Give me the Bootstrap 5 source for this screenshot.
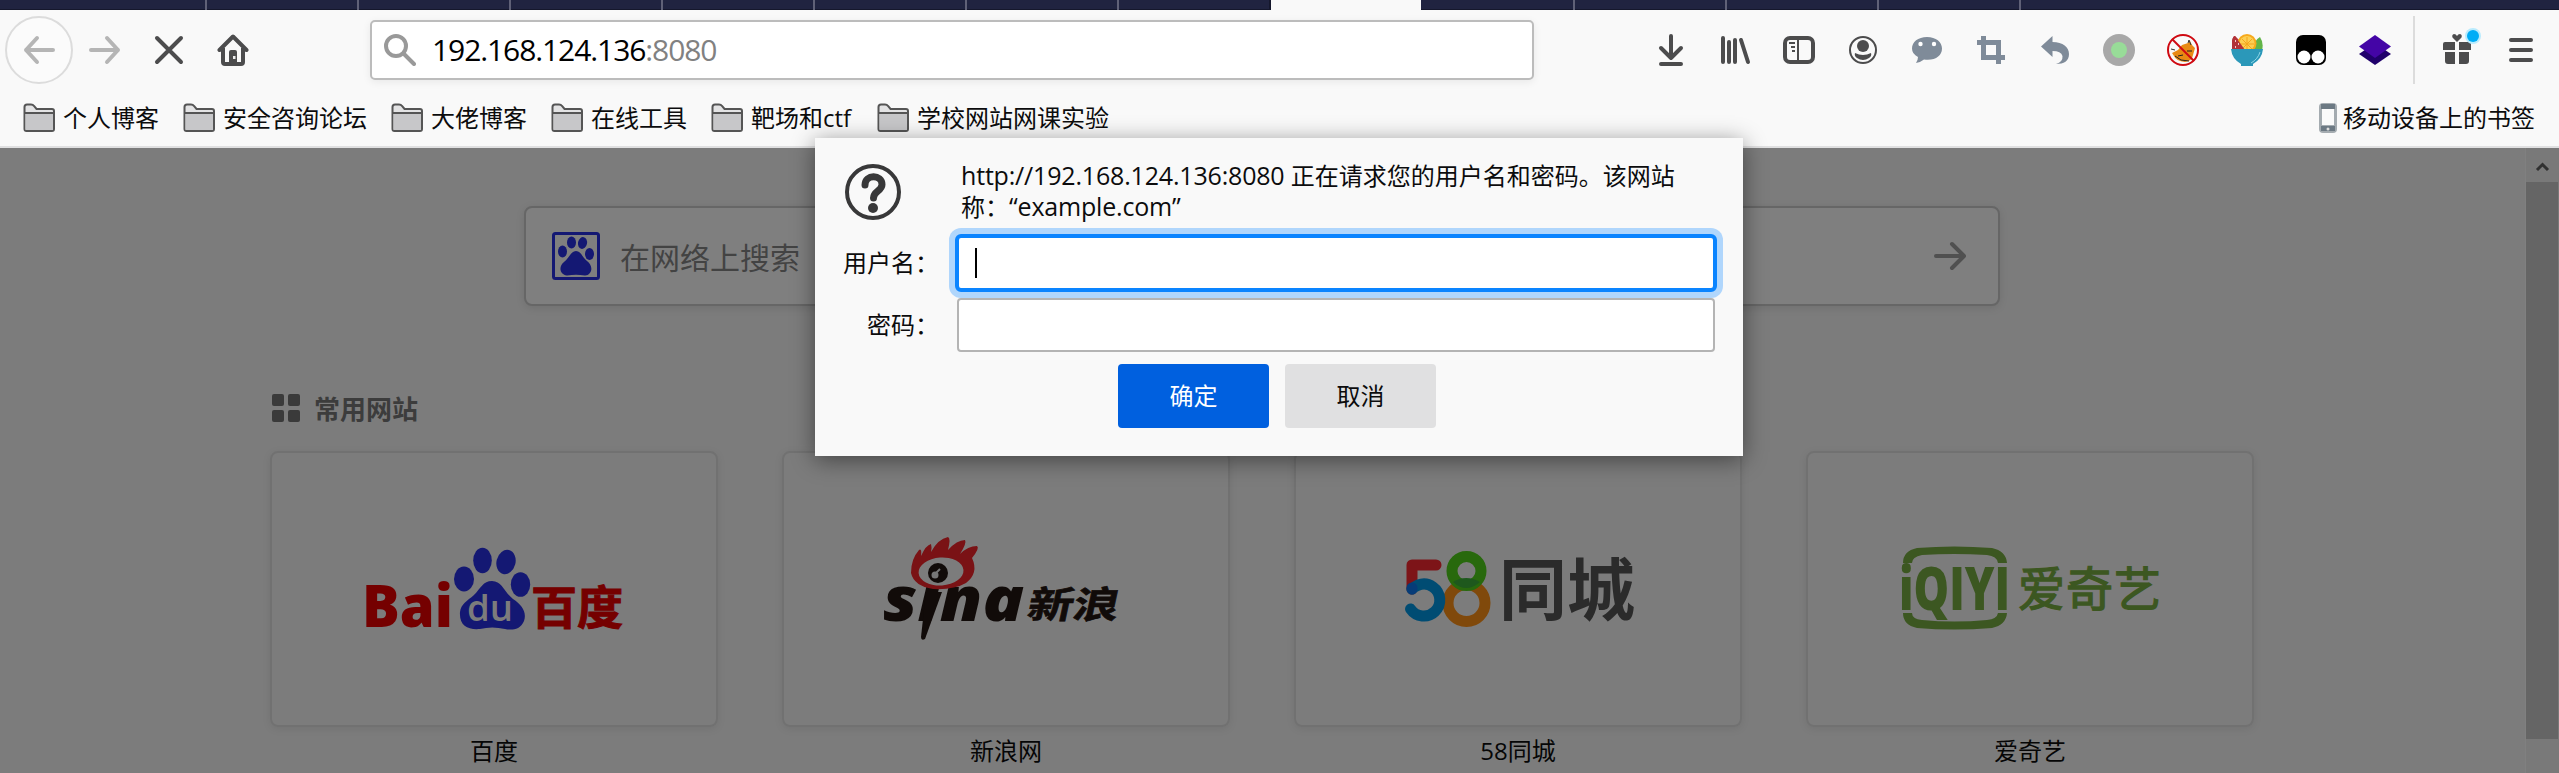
<!DOCTYPE html>
<html lang="zh-CN">
<head>
<meta charset="utf-8">
<title>新标签页</title>
<link href="https://cdn.jsdelivr.net/npm/bootstrap@5.3.0/dist/css/bootstrap.min.css" rel="stylesheet">
<script src="https://cdn.jsdelivr.net/npm/bootstrap@5.3.0/dist/js/bootstrap.bundle.min.js"></script>
<style>
body{width:2559px;height:773px;overflow:hidden;background:#7c7c7c;color:#0c0c0d;font:24px/30px "Open Sans","Noto Sans CJK SC",sans-serif}
svg{display:block;flex:none}
.tabstrip{height:10px;background:#202340;border-bottom:1px solid #15172c}
.tabstrip>i{width:152px;height:10px;border-right:2px solid #606177;flex:none}
.tabstrip>i:first-child{width:207px}
.tabstrip>i.before{border-color:#15172c}
.tabstrip>i.active-tab{width:150px;background:#f9f9f9;border:0}
.tabstrip>i.after-active{width:154px}
.tabstrip>i.last-tab{width:142px}
.toolbar-top{height:80px;background:#f9f9f9;padding:0 26px 0 5px}
.back-btn{width:68px;height:68px;border:2px solid #dcdcdc;background:#fbfbfb;border-radius:50%;padding:16px}
.urlbar{width:1164px;height:60px;border:2px solid #bcbcbc;border-radius:5px;background:#fff;box-shadow:0 2px 8px rgba(0,0,0,.07);margin-left:121px;padding-left:12px;font-size:30px;letter-spacing:-1.08px;color:#000}
.urlbar .port{color:#818181}
.ext{gap:32px;margin-left:121px}
.divline{width:2px;height:68px;background:#dcdcdc;margin-left:22px}
.bookmarks{height:58px;background:#f9f9f9;border-bottom:2px solid #e0e0e1;padding:0 24px 0 23px;gap:24px;line-height:56px}
.bookmarks .item{gap:8px;white-space:nowrap}
.bookmarks .item svg{margin-bottom:1px}
.bookmarks .wide{width:142px}
.viewport{height:625px}
.page-area{width:2526px;border-right:1px solid #808080}
.searchbox{width:1476px;height:100px;margin:58px 0 0 524px;border:2px solid #666;border-radius:8px;background:#7f7f7f;box-shadow:0 2px 8px rgba(0,0,0,.1);padding:0 32px 0 26px;font-size:30px;color:#434343}
.heading{margin:86px 0 0 272px;font-size:26px;font-weight:700;color:#3c3c3c;height:34px}
.tiles{margin:25px 0 0 270px;display:grid;grid-template-columns:repeat(4,448px);gap:64px;text-align:center;color:#060606}
.tilebox{height:276px;border:2px solid #717171;border-radius:8px;box-shadow:0 2px 8px rgba(0,0,0,.08);margin-bottom:9px}
.tilebox svg{margin:-2px}
.scroll{width:33px;background:#797979}
.scroll .thumb{width:32px;height:557px;background:#656565}
.dialog-box{position:absolute;left:815px;top:138px;width:928px;height:318px;background:#f9f9f9;box-shadow:0 4px 22px rgba(0,0,0,.45);padding:23px 28px 28px 30px;z-index:5}
.msg{margin:-1px 0 0 60px;white-space:nowrap}
.msg .lat{font-size:25px;letter-spacing:-.18px}
.lab{width:96px;white-space:nowrap;text-align:right;margin:0 20px 0 -2px}
.fld{width:758px;height:54px;border:2px solid #b4b4b4;border-radius:4px;background:#fff}
.fld.focused{width:762px;height:58px;border:4px solid #0a84ff;border-radius:6px;box-shadow:0 0 0 6px #b0d6fc;margin:0 -2px;padding:10px 0 0 16px}
.fld.focused i{display:block;width:2px;height:30px;background:#000}
.dbtn{width:151px;height:64px;border:0;border-radius:4px;font-size:24px;line-height:30px;padding:0}
.ok{background:#0060df;color:#fff}.cancel{background:#e0e0e1;color:#0c0c0d}
text{font-family:"Open Sans","Noto Sans CJK SC",sans-serif}
</style>
</head>
<body>
<svg width="0" height="0" class="position-absolute"><defs>
<g id="folder"><path d="M1.5 26V4Q1.5 1.500 4 1.500H8Q10 1.500 11 3L13.500 6H29Q31 6 31 8V26Q31 28 29 28H3.500Q1.500 28 1.500 26Z" fill="#e3e3e4" stroke="#555" stroke-width="2"/><path d="M2.500 11H30V27H2.500Z" fill="#c7c7c9"/><path d="M1 10H31" stroke="#555" stroke-width="2"/></g>
</defs></svg>

<div class="tabstrip d-flex"><i></i><i></i><i></i><i></i><i></i><i></i><i></i><i class="before"></i><i class="active-tab"></i><i class="after-active"></i><i></i><i></i><i class="last-tab"></i></div>

<nav class="toolbar-top d-flex align-items-center">
  <div class="back-btn"><svg width="32" height="32" viewBox="0 0 32 32" fill="none" stroke="#b5b5b5" stroke-width="4" stroke-linecap="round" stroke-linejoin="round"><path d="M30 16H3M14 4L3 16L14 28"/></svg></div>
  <svg class="ms-3" width="32" height="32" viewBox="0 0 32 32" fill="none" stroke="#b5b5b5" stroke-width="4" stroke-linecap="round" stroke-linejoin="round"><path d="M2 16H29M18 4L29 16L18 28"/></svg>
  <svg style="margin-left:32px" width="32" height="32" viewBox="0 0 32 32" stroke="#4c4c4d" stroke-width="4" stroke-linecap="round"><path d="M4 4L28 28M28 4L4 28"/></svg>
  <svg style="margin-left:32px" width="32" height="32" viewBox="0 0 32 32"><path d="M2.500 16L16 2.500L29.500 16" fill="none" stroke="#4c4c4d" stroke-width="4" stroke-linecap="round" stroke-linejoin="round"/><path d="M6 14V28Q6 30 8 30H24Q26 30 26 28V14" fill="none" stroke="#4c4c4d" stroke-width="4"/><path d="M12 32V18Q12 16 14 16H18Q20 16 20 18V32Z" fill="#4c4c4d"/><rect x="16" y="22" width="2.500" height="3" fill="#eee"/></svg>
  <div class="urlbar d-flex align-items-center"><svg class="me-3" width="32" height="32" viewBox="0 0 32 32" fill="none" stroke="#999" stroke-width="4" stroke-linecap="round"><circle cx="12" cy="12" r="10"/><path d="M19.500 19.500L30 30"/></svg><span>192.168.124.136<span class="port">:8080</span></span></div>
  <div class="ext d-flex">
    <svg width="32" height="32" viewBox="0 0 32 32" fill="none" stroke="#4c4c4d" stroke-width="4" stroke-linecap="round" stroke-linejoin="round"><path d="M16 2V24M6 14L16 24L26 14M6 30H26"/></svg>
    <svg width="32" height="32" viewBox="0 0 32 32" stroke="#4c4c4d" stroke-width="4" stroke-linecap="round"><path d="M4 4V28M10 8V28M16 6V28M22 6L29 28"/></svg>
    <svg width="32" height="32" viewBox="0 0 32 32" fill="none" stroke="#4c4c4d"><rect x="2" y="4" width="28" height="24" rx="5" stroke-width="4"/><path d="M15 6V26M6 9H12M8 13H12M9 17H12" stroke-width="2"/></svg>
    <svg width="32" height="32" viewBox="0 0 32 32"><circle cx="16" cy="16" r="13" fill="none" stroke="#4c4c4d" stroke-width="2"/><circle cx="16" cy="12" r="6" fill="#4c4c4d"/><path d="M8 19Q16 23 24 19Q25 22 22 24Q16 28 10 24Q7 22 8 19Z" fill="#4c4c4d"/></svg>
    <svg width="32" height="32" viewBox="0 0 32 32"><path d="M16 3C7 3 1 8 1 14.500Q1 20 7 23Q7 26 5 29Q10 28 13 25.500C24 27 31 22 31 14.500C31 8 25 3 16 3Z" fill="#7f8b99"/><circle cx="9.500" cy="10" r="2.200" fill="#fff"/><circle cx="23" cy="10" r="2.200" fill="#fff"/></svg>
    <svg width="32" height="32" viewBox="0 0 32 32" fill="none" stroke="#7f8b99" stroke-width="5"><path d="M2 8.500H23.500V30M8.500 2V23.500H30"/></svg>
    <svg width="32" height="32" viewBox="0 0 32 32"><path d="M2 12.500L13.500 2V8C24 8 30 13 30 20C30 27 25 30 17 30Q24 28 23.500 22Q22 17 13.500 17V23Z" fill="#7f8b99"/></svg>
    <svg width="32" height="32" viewBox="0 0 32 32"><circle cx="16" cy="16" r="16" fill="#a8a8a8"/><circle cx="16" cy="16" r="8" fill="#98dc98"/></svg>
    <svg width="32" height="32" viewBox="0 0 32 32"><path d="M5 19L11 16L15 11L21 9L23 7L25 11L28 14L26 21Q25 27 18 28Q9 27 7 22Z" fill="#e88a14"/><path d="M8 22L14 26L22 27M11 22L16 21M20 17L25 17" stroke="#222" fill="none"/><path d="M21 9L22 6L24 11M4 15L8 16" stroke="#333" fill="none"/><circle cx="16" cy="16" r="15" fill="none" stroke="#cf0a12" stroke-width="2"/><path d="M5 5L27 27" stroke="#cf0a12" stroke-width="2"/></svg>
    <svg width="32" height="32" viewBox="0 0 32 32"><path d="M1 16V7Q2 2 4 2L18 16Z" fill="#b23238"/><path d="M23 16Q22 7 29 3Q33 9 31 16Z" fill="#62b549"/><circle cx="16" cy="9.500" r="9.500" fill="#f6a91c"/><circle cx="16" cy="9.500" r="7.500" fill="#fccf52"/><path d="M16 3V16M9 10H23M11 5L21 15M21 5L11 15" stroke="#f4a51c"/><path d="M1 16V7Q2 2 4 2L14 16Z" fill="#b23238"/><path d="M4 7h1M7 10h1M4 13h1" stroke="#fff" stroke-width="1.500"/><path d="M0 15H32Q31 25 22 30V32H10V30Q1 25 0 15Z" fill="#2b98b9"/><path d="M29 18Q27 25 20 29" fill="none" stroke="#8ed6e6"/></svg>
    <svg width="32" height="32" viewBox="0 0 32 32"><rect x="1" y="1" width="30" height="30" rx="7"/><circle cx="9" cy="23" r="6.500" fill="#fff"/><circle cx="23" cy="23" r="6.500" fill="#fff"/></svg>
    <svg width="32" height="32" viewBox="0 0 32 32"><path d="M0 20L16 9L32 20L16 31Z" fill="#20006b"/><path d="M0 12.500L16 1L32 12.500L16 24Z" fill="#4405a6"/></svg>
  </div>
  <div class="divline"></div>
  <svg style="margin-left:26px" width="40" height="44" viewBox="0 0 40 44"><path d="M2 22V16Q2 14 4 14H14V22ZM18 14H28Q30 14 30 16V22H18ZM4 24H14V36H7Q4 36 4 33ZM18 24H28V33Q28 36 25 36H18Z" fill="#4c4c4d"/><path d="M16 14L11.500 9.500Q10.500 6.500 13 6Q15 6 16 8Q17 6 19 6Q21.500 6.500 20.500 9.500Z" fill="#4c4c4d"/><circle cx="32" cy="8" r="8" fill="#b9ebfd"/><circle cx="32" cy="8" r="6" fill="#00adf6"/></svg>
  <svg class="ms-auto" width="24" height="32" viewBox="0 0 24 32" stroke="#4c4c4d" stroke-width="4" stroke-linecap="round"><path d="M2 6H22M2 16H22M2 26H22"/></svg>
</nav>

<div class="bookmarks d-flex align-items-center">
  <div class="item d-flex align-items-center"><svg width="32" height="30"><use href="#folder"/></svg><span>个人博客</span></div>
  <div class="item d-flex align-items-center"><svg width="32" height="30"><use href="#folder"/></svg><span>安全咨询论坛</span></div>
  <div class="item d-flex align-items-center"><svg width="32" height="30"><use href="#folder"/></svg><span>大佬博客</span></div>
  <div class="item d-flex align-items-center"><svg width="32" height="30"><use href="#folder"/></svg><span>在线工具</span></div>
  <div class="item wide d-flex align-items-center"><svg width="32" height="30"><use href="#folder"/></svg><span>靶场和ctf</span></div>
  <div class="item d-flex align-items-center"><svg width="32" height="30"><use href="#folder"/></svg><span>学校网站网课实验</span></div>
  <div class="item d-flex align-items-center ms-auto" style="gap:5px"><svg width="20" height="30" viewBox="0 0 20 30"><rect x="1" y="0" width="18" height="30" rx="4" fill="#a4abb0"/><path d="M3 1H17V6H3ZM3 23H17V28H3Z" fill="#6c7983"/><rect x="4" y="6" width="12" height="16" fill="#fafafa"/><circle cx="10" cy="26" r="1.500" fill="#ddd"/></svg><span>移动设备上的书签</span></div>
</div>

<main class="viewport d-flex">
  <div class="page-area">
    <div class="searchbox d-flex align-items-center">
      <svg width="48" height="48" viewBox="0 0 48 48"><rect x="1.500" y="1.500" width="45" height="45" rx="2" fill="none" stroke="#141873" stroke-width="3"/><g fill="#141873"><ellipse cx="10.500" cy="19.500" rx="4.500" ry="6"/><ellipse cx="19.500" cy="10.500" rx="4.500" ry="6"/><ellipse cx="30.500" cy="11" rx="4.500" ry="6" transform="rotate(12 30.500 11)"/><ellipse cx="37.500" cy="22" rx="4.500" ry="6"/><path d="M24 19C29 19 30 25 35 29C42 34 40 43 33 43.500Q24 42 15 43.500C8 43 6 35 12 30C18 25 19 19 24 19Z"/></g></svg>
      <span style="margin-left:20px;padding-top:3px">在网络上搜索</span>
      <svg class="ms-auto" width="32" height="32" viewBox="0 0 32 32" fill="none" stroke="#505050" stroke-width="4" stroke-linecap="round" stroke-linejoin="round"><path d="M2 16H29M18 4L30 16L18 28"/></svg>
    </div>
    <div class="heading d-flex align-items-center"><svg style="margin-bottom:2px" width="28" height="28" fill="#3a3a3a"><rect width="12" height="12" rx="2"/><rect x="16" width="12" height="12" rx="2"/><rect y="16" width="12" height="12" rx="2"/><rect x="16" y="16" width="12" height="12" rx="2"/></svg><span style="margin-left:14px">常用网站</span></div>
    <div class="tiles">
      <div><div class="tilebox"><svg width="448" height="276" viewBox="270 451 448 276">
        <text x="362" y="627" font-size="58" font-weight="800" fill="#750000" textLength="91" lengthAdjust="spacingAndGlyphs">Bai</text>
        <g fill="#141873"><ellipse cx="464" cy="579" rx="10" ry="12.500"/><ellipse cx="482.500" cy="560.500" rx="9.300" ry="12.700"/><ellipse cx="506" cy="562" rx="9.500" ry="12.300" transform="rotate(14 506 562)"/><ellipse cx="520.500" cy="584.500" rx="9.700" ry="12.300"/><path d="M492 581C502 581 504 592 513 599C522 605 527 612 524 621C520 631 510 630 505 629Q492 626 480 629C468 630 459 626 460 612C461 604 467 601 474 595C481 588 483 581 492 581Z"/></g>
        <text x="467" y="621" font-size="36" font-weight="600" fill="#7c7c7c" textLength="46" lengthAdjust="spacingAndGlyphs">du</text>
        <text x="531" y="624" font-size="46" font-weight="700" fill="#750000" stroke="#750000" textLength="92">百度</text>
      </svg></div>百度</div>
      <div><div class="tilebox"><svg width="448" height="276" viewBox="782 451 448 276">
        <text x="883" y="621" font-size="62" font-weight="800" font-style="italic" fill="#110b09" textLength="141" lengthAdjust="spacingAndGlyphs">sina</text>
        <path d="M926 592H942L925 639Q921 641 921 637Z" fill="#110b09"/>
        <path d="M911 573Q911 559 919 550Q922 548 921 556Q926 545 931 544Q932 547 931 552Q938 539 948 537Q951 538 948 550Q957 540 965 540Q967 543 960 554Q968 546 977 546Q980 548 972 558Q979 573 966 583Q954 590 933 589Q914 586 911 573Z" fill="#7a1215"/>
        <ellipse cx="941" cy="571.500" rx="22.500" ry="14" fill="#7c7c7c" transform="rotate(-4 941 571)"/><circle cx="938" cy="573" r="10" fill="#110b09"/><circle cx="935" cy="575" r="3.500" fill="#777"/><path d="M936 573L940 569" stroke="#777" stroke-width="2"/>
        <text x="1157" y="618" transform="skewX(-12)" font-size="37" font-weight="700" fill="#110b09" stroke="#110b09" stroke-width=".7" textLength="91" lengthAdjust="spacingAndGlyphs">新浪</text>
      </svg></div>新浪网</div>
      <div><div class="tilebox"><svg width="448" height="276" viewBox="1294 451 448 276" fill="none" stroke-linecap="round">
        <path d="M1412 589V565H1436" stroke="#7d1418" stroke-width="11" stroke-linejoin="round"/>
        <circle cx="1466.500" cy="603" r="18.500" stroke="#80490b" stroke-width="11"/><circle cx="1466.500" cy="571" r="14.500" stroke="#28690d" stroke-width="11"/><path d="M1453 582Q1466 574 1480 582Q1466 594 1453 582Z" fill="#1e581d"/>
        <path d="M1412 589Q1423 580 1433 587A16 16 0 1 1 1410.500 609" stroke="#004c73" stroke-width="11"/><path d="M1412 588V589" stroke="#063c78" stroke-width="11"/>
        <text x="1499" y="615" font-size="68" font-weight="700" fill="#2b2b2b" textLength="136">同城</text>
      </svg></div>58同城</div>
      <div><div class="tilebox"><svg width="448" height="276" viewBox="1806 451 448 276" fill="#3c5721">
        <path d="M1903 563Q1903 551 1917 548Q1954 545 1992 548Q2006 551 2007 563H1998Q1997 556 1987 555Q1954 553 1922 555Q1912 557 1912 563ZM1903 613H1912Q1912 619 1922 620Q1954 623 1987 620Q1997 619 1998 613H2007Q2006 625 1992 628Q1954 631 1917 628Q1903 625 1903 613Z"/>
        <text x="1899" y="610" font-size="60" font-weight="800" textLength="111" lengthAdjust="spacingAndGlyphs">iQIYI</text>
        <text x="2018" y="606" font-size="47" font-weight="400" stroke="#3c5721" stroke-width="1.3" textLength="143">爱奇艺</text>
      </svg></div>爱奇艺</div>
    </div>
  </div>
  <div class="scroll"><svg width="32" height="34" viewBox="0 0 32 34" fill="none" stroke="#303030" stroke-width="3"><path d="M11 22L16.500 16.500L22 22"/></svg><div class="thumb"></div></div>
</main>

<div class="dialog-box" role="dialog">
  <div class="d-flex" style="height:73px">
    <svg style="margin-top:3px" width="56" height="56" viewBox="0 0 56 56"><circle cx="28" cy="28" r="26" fill="none" stroke="#383839" stroke-width="4"/><path d="M20 21C20 10 37 10 37 20.500C37 27 28.500 27 28.500 34" fill="none" stroke="#383839" stroke-width="7" stroke-linecap="round"/><circle cx="28" cy="44" r="5" fill="#383839"/></svg>
    <div class="msg"><span class="lat">http://192.168.124.136:8080 </span>正在请求您的用户名和密码。该网站<br>称：<span class="lat">“example.com”</span></div>
  </div>
  <div class="d-flex align-items-center"><div class="lab">用户名：</div><div class="fld focused" style="margin-left:-4px"><i></i></div></div>
  <div class="d-flex align-items-center" style="margin-top:6px"><div class="lab">密码：</div><div class="fld" style="margin-left:-2px"></div></div>
  <div class="d-flex justify-content-center gap-3" style="margin-top:12px;padding-right:6px"><button class="dbtn ok">确定</button><button class="dbtn cancel">取消</button></div>
</div>
</body>
</html>
